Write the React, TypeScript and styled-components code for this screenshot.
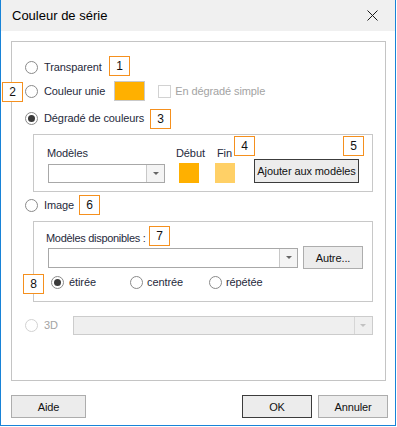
import React from 'react';
import styled, { createGlobalStyle } from 'styled-components';

const GlobalStyle = createGlobalStyle`
  body {
    margin: 0;
    background: #ffffff;
    font-family: 'Liberation Sans', Arial, sans-serif;
  }
`;

// Window frame
const Window = styled.div`
  position: relative;
  box-sizing: border-box;
  width: 396px;
  height: 426px;
  border: 1px solid #1883d7;
  border-top: none;
  background: #ffffff;
  font-size: 11px;
  color: #1f2a3c;
`;

const TitleBar = styled.div`
  height: 31px;
  background: #f0f0f0;
  display: flex;
  align-items: center;
  justify-content: space-between;
  padding: 0 17px 0 11px;
`;

const Title = styled.span`
  font-size: 13px;
  color: #000000;
`;

const Body = styled.div`
  padding: 10px 0 0 10px;
`;

const GroupBox = styled.div`
  box-sizing: border-box;
  width: 375px;
  height: 340px;
  border: 1px solid #c4c4c4;
  padding: 15px 0 0 13px;
`;

const Row = styled.div<{ $mt?: number }>`
  display: flex;
  align-items: center;
  height: 20px;
  margin-top: ${(p) => p.$mt ?? 0}px;
`;

const Radio = styled.span<{ $checked?: boolean; $disabled?: boolean }>`
  box-sizing: border-box;
  flex: none;
  width: 13px;
  height: 13px;
  border-radius: 50%;
  border: 1px solid ${(p) => (p.$disabled ? '#d2d2d2' : '#8a8a8a')};
  background: #ffffff;
  display: flex;
  align-items: center;
  justify-content: center;
  &::after {
    content: '';
    display: ${(p) => (p.$checked ? 'block' : 'none')};
    width: 7px;
    height: 7px;
    border-radius: 50%;
    background: #3a3a3a;
  }
`;

const Label = styled.span<{ $disabled?: boolean; $ml?: number; $ls?: number }>`
  margin-left: ${(p) => p.$ml ?? 6}px;
  line-height: 14px;
  white-space: nowrap;
  letter-spacing: ${(p) => p.$ls ?? -0.1}px;
  color: ${(p) => (p.$disabled ? '#a3a3a3' : '#1f2a3c')};
`;

const Swatch = styled.span<{ $color: string; $w: number; $ml?: number }>`
  box-sizing: border-box;
  display: block;
  width: ${(p) => p.$w}px;
  height: 20px;
  margin-left: ${(p) => p.$ml ?? 0}px;
  background: ${(p) => p.$color};
  border: 1px solid ${(p) => (p.$w > 25 ? '#c9c9c9' : p.$color)};
`;

const CheckBox = styled.span`
  box-sizing: border-box;
  width: 13px;
  height: 13px;
  margin-left: 13px;
  border: 1px solid #d2d2d2;
  background: #ffffff;
`;

const InnerBox = styled.div<{ $h: number; $mt: number }>`
  box-sizing: border-box;
  width: 340px;
  height: ${(p) => p.$h}px;
  margin: ${(p) => p.$mt}px 0 0 8px;
  border: 1px solid #c8c8c8;
`;

const GradientRow = styled.div`
  display: flex;
  align-items: flex-end;
  padding: 11px 0 0 14px;
`;

const Col = styled.div<{ $w: number; $ml?: number }>`
  display: flex;
  flex-direction: column;
  width: ${(p) => p.$w}px;
  margin-left: ${(p) => p.$ml ?? 0}px;
`;

const SwatchSlot = styled.div<{ $ml: number }>`
  margin: 3px 0 0 ${(p) => p.$ml}px;
`;

const Combo = styled.div<{ $w: number; $h: number; $disabled?: boolean; $mt?: number; $ml?: number }>`
  box-sizing: border-box;
  display: flex;
  justify-content: flex-end;
  width: ${(p) => p.$w}px;
  height: ${(p) => p.$h}px;
  margin: ${(p) => p.$mt ?? 0}px 0 0 ${(p) => p.$ml ?? 0}px;
  border: 1px solid ${(p) => (p.$disabled ? '#cccccc' : '#a8a8a8')};
  background: ${(p) => (p.$disabled ? '#efefef' : '#ffffff')};
`;

const ComboArrow = styled.span<{ $disabled?: boolean }>`
  width: 17px;
  display: flex;
  align-items: center;
  justify-content: center;
  border-left: 1px solid ${(p) => (p.$disabled ? '#d6d6d6' : '#c8c8c8')};
  background: ${(p) => (p.$disabled ? '#efefef' : '#f4f4f4')};
  &::after {
    content: '';
    border-left: 3px solid transparent;
    border-right: 3px solid transparent;
    border-top: 3px solid ${(p) => (p.$disabled ? '#c2c2c2' : '#666666')};
  }
`;

const Button = styled.button<{ $w: number; $h: number; $focus?: boolean; $ml?: number }>`
  box-sizing: border-box;
  width: ${(p) => p.$w}px;
  height: ${(p) => p.$h}px;
  margin-left: ${(p) => p.$ml ?? 0}px;
  padding: 0;
  font-family: inherit;
  font-size: 11px;
  letter-spacing: -0.1px;
  color: #111111;
  background: #ececec;
  border: 1px solid ${(p) => (p.$focus ? '#3c3c3c' : '#adadad')};
  border-radius: 0;
`;

const ImageBox = styled.div`
  padding: 9px 0 0 14px;
`;

const ComboRow = styled.div`
  display: flex;
  align-items: center;
  height: 23px;
  margin-top: 1px;
`;

const OptionRow = styled.div`
  display: flex;
  align-items: center;
  height: 16px;
  margin-top: 5px;
  padding-left: 3px;
`;

const Option = styled.div`
  display: flex;
  align-items: center;
  width: 79px;
`;

const Footer = styled.div`
  display: flex;
  justify-content: space-between;
  width: 377px;
  margin-top: 14px;
`;

const ButtonGroup = styled.div`
  display: flex;
`;

// Annotation markers overlaid on the dialog
const Badge = styled.span<{ $x: number; $y: number }>`
  position: absolute;
  left: ${(p) => p.$x}px;
  top: ${(p) => p.$y}px;
  box-sizing: border-box;
  width: 21px;
  height: 20px;
  border: 1px solid #f5901e;
  background: #ffffff;
  color: #111111;
  font-size: 12px;
  display: flex;
  align-items: center;
  justify-content: center;
`;

const badges = [
  { n: 1, x: 108, y: 56 },
  { n: 2, x: 1, y: 82 },
  { n: 3, x: 149, y: 109 },
  { n: 4, x: 233, y: 136 },
  { n: 5, x: 342, y: 136 },
  { n: 6, x: 78, y: 195 },
  { n: 7, x: 148, y: 226 },
  { n: 8, x: 22, y: 274 },
];

const App: React.FC = () => {
  return (
    <>
      <GlobalStyle />
      <Window>
        <TitleBar>
          <Title>Couleur de série</Title>
          <svg width="11" height="11" viewBox="0 0 11 11">
            <path d="M0.5 0.5 L10.5 10.5 M10.5 0.5 L0.5 10.5" stroke="#1a1a1a" strokeWidth="1" />
          </svg>
        </TitleBar>
        <Body>
          <GroupBox>
            <Row>
              <Radio />
              <Label>Transparent</Label>
            </Row>
            <Row $mt={4}>
              <Radio />
              <Label>Couleur unie</Label>
              <Swatch $color="#ffb000" $w={31} $ml={9} />
              <CheckBox />
              <Label $disabled $ml={4}>En dégradé simple</Label>
            </Row>
            <Row $mt={7}>
              <Radio $checked />
              <Label>Dégradé de couleurs</Label>
            </Row>
            <InnerBox $h={58} $mt={6}>
              <GradientRow>
                <Col $w={117}>
                  <Label $ml={-1}>Modèles</Label>
                  <Combo $w={117} $h={19} $mt={4}>
                    <ComboArrow />
                  </Combo>
                </Col>
                <Col $w={39} $ml={11}>
                  <Label $ml={0}>Début</Label>
                  <SwatchSlot $ml={3}>
                    <Swatch $color="#ffb000" $w={20} />
                  </SwatchSlot>
                </Col>
                <Col $w={39}>
                  <Label $ml={2}>Fin</Label>
                  <SwatchSlot $ml={0}>
                    <Swatch $color="#ffd066" $w={20} />
                  </SwatchSlot>
                </Col>
                <Button $w={105} $h={24} $focus>
                  Ajouter aux modèles
                </Button>
              </GradientRow>
            </InnerBox>
            <Row $mt={3}>
              <Radio />
              <Label>Image</Label>
            </Row>
            <InnerBox $h={81} $mt={6}>
              <ImageBox>
                <Label $ml={-2} $ls={-0.3}>Modèles disponibles :</Label>
                <ComboRow>
                  <Combo $w={250} $h={20}>
                    <ComboArrow />
                  </Combo>
                  <Button $w={60} $h={23} $ml={5}>
                    Autre...
                  </Button>
                </ComboRow>
                <OptionRow>
                  <Option>
                    <Radio $checked />
                    <Label $ml={5}>étirée</Label>
                  </Option>
                  <Option>
                    <Radio />
                    <Label $ml={4}>centrée</Label>
                  </Option>
                  <Option>
                    <Radio />
                    <Label $ml={4}>répétée</Label>
                  </Option>
                </OptionRow>
              </ImageBox>
            </InnerBox>
            <Row $mt={13}>
              <Radio $disabled />
              <Label $disabled>3D</Label>
              <Combo $w={300} $h={19} $disabled $ml={15}>
                <ComboArrow $disabled />
              </Combo>
            </Row>
          </GroupBox>
          <Footer>
            <Button $w={75} $h={23}>
              Aide
            </Button>
            <ButtonGroup>
              <Button $w={70} $h={23} $focus>
                OK
              </Button>
              <Button $w={70} $h={23} $ml={6}>
                Annuler
              </Button>
            </ButtonGroup>
          </Footer>
        </Body>
        {badges.map((b) => (
          <Badge key={b.n} $x={b.x} $y={b.y}>
            {b.n}
          </Badge>
        ))}
      </Window>
    </>
  );
};

export default App;
